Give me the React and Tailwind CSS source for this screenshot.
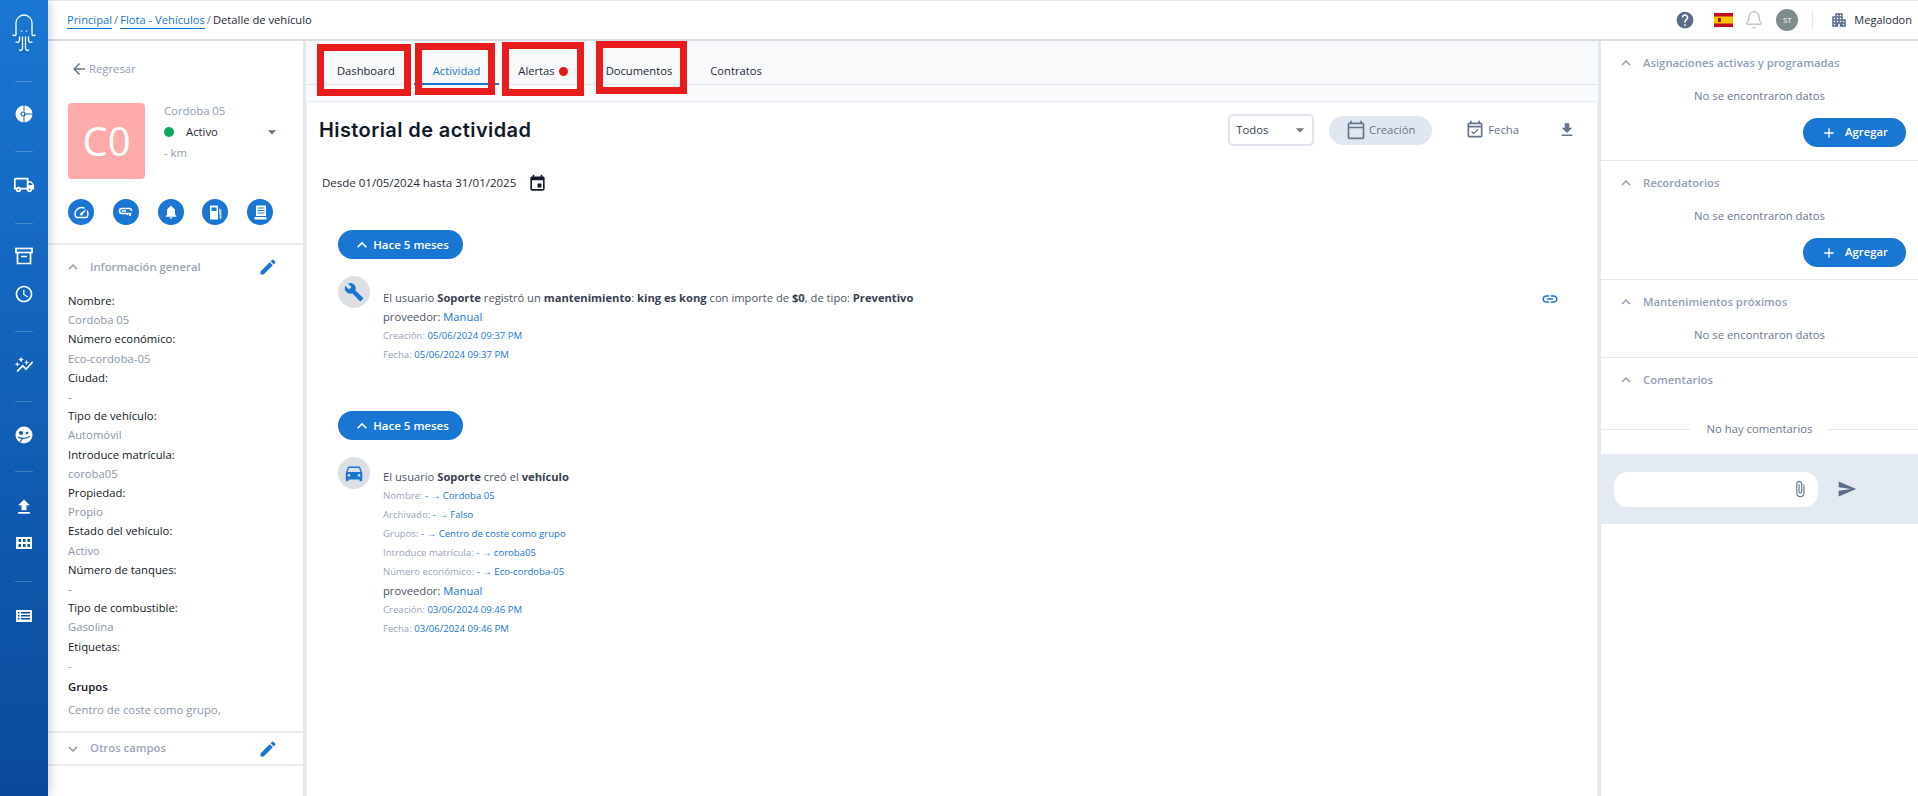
import React from "react";
import {
  MdOutlineLocalShipping, MdOutlineAccessTime, MdAutoGraph, MdFileUpload,
  MdEdit, MdArrowBack, MdKeyboardArrowUp, MdKeyboardArrowDown, MdArrowDropDown, MdEvent, MdOutlineCalendarToday,
  MdOutlineEventAvailable, MdFileDownload, MdHelp, MdApartment, MdBuild, MdDirectionsCar, MdLink, MdAttachFile, MdSend, MdAdd,
  MdOutlineSpeed, MdNotifications, MdExpandLess,
} from "react-icons/md";
import { Bell } from "lucide-react";

function Logo() {
  return (
    <svg width="26" height="42" viewBox="0 0 26 42" fill="none" stroke="white" strokeWidth="1.3" strokeLinecap="round">
      <path d="M5 22V11a8 8 0 0 1 16 0v11c0 2 2 2 3 1" />
      <path d="M5 22c0 2-2 2-3 1" />
      <path d="M8.500 25v3c0 2-2 3-3.500 2" />
      <path d="M11.500 25v11c0 2-2 3-3 2" />
      <path d="M14.500 25v11c0 2 2 3 3 2" />
      <path d="M17.500 25v3c0 2 2 3 3.500 2" />
      <circle cx="10.500" cy="19" r=".8" fill="white" stroke="none" />
      <circle cx="15.500" cy="19" r=".8" fill="white" stroke="none" />
    </svg>
  );
}

function Flag() {
  return (
    <svg width="19" height="14" viewBox="0 0 19 14">
      <rect width="19" height="14" fill="#c60b1e" />
      <rect y="3.500" width="19" height="7" fill="#ffc400" />
      <rect x="4" y="5" width="3" height="4" fill="#ad1519" />
    </svg>
  );
}

function PieIcon() {
  return (
    <svg width="18" height="18" viewBox="0 0 18 18" className="shrink-0 mt-[23px]">
      <circle cx="9" cy="9" r="8.500" fill="white" />
      <path d="M9 0v6.500M9 11.500V18M9 9h9" stroke="#1669bf" strokeWidth="1" />
      <circle cx="8" cy="9" r="2" fill="none" stroke="#1669bf" strokeWidth="1.200" />
    </svg>
  );
}

function ArchiveIcon() {
  return (
    <svg width="18" height="18" viewBox="0 0 18 18" fill="none" stroke="white" strokeWidth="1.700" className="shrink-0 mt-[23px]">
      <rect x="1" y="1.500" width="16" height="4" />
      <path d="M2.500 5.500V16.500H15.500V5.500M6 9.500h6" />
    </svg>
  );
}

function FaceIcon() {
  return (
    <svg width="18" height="18" viewBox="0 0 18 18" className="shrink-0 mt-[24px]">
      <circle cx="9" cy="9" r="8.500" fill="white" />
      <circle cx="6" cy="7" r="2" fill="#0f5cb0" />
      <circle cx="12" cy="7" r="1.300" fill="#0f5cb0" />
      <path d="M3 11c3 2 7 2 12-.5M5 16l3-4" stroke="#0f5cb0" strokeWidth="1.200" fill="none" />
    </svg>
  );
}

function GridIcon() {
  return (
    <svg width="16" height="12" viewBox="0 0 16 12" className="shrink-0 mt-[20px]">
      <rect width="16" height="12" fill="white" />
      {[2.500, 7, 11.500].map((x) => [2, 7].map((y) => <rect key={`${x}-${y}`} x={x} y={y} width="2.500" height="3" fill="#0b57a8" />))}
    </svg>
  );
}

function ListIcon() {
  return (
    <svg width="16" height="12" viewBox="0 0 16 12" className="shrink-0 mt-[28px]">
      <rect width="16" height="12" fill="white" />
      {[2, 5, 8].map((y) => (
        <g key={y} fill="#0b4fa0">
          <rect x="2" y={y} width="1.500" height="1.500" />
          <rect x="5" y={y} width="9" height="1.500" />
        </g>
      ))}
    </svg>
  );
}

function KeyIcon() {
  return (
    <svg width="16" height="12" viewBox="0 0 16 12" fill="none" stroke="white" strokeWidth="1.600">
      <path d="M8 2.500H4a2.500 2.500 0 0 0 0 5h9.500M12 7.500v2.500M9.500 7.500v1.500M8 5H4" />
      <path d="M8 2.500h3.500a2 2 0 0 1 2 2.500" />
    </svg>
  );
}

function FuelIcon() {
  return (
    <svg width="13" height="15" viewBox="0 0 13 15" fill="white">
      <path d="M1 1.500A1 1 0 0 1 2 .5h6a1 1 0 0 1 1 1V14.500H1zM2.500 2.500V6h5V2.500z" fillRule="evenodd" />
      <path d="M10 3l2.500 2V13a1 1 0 0 1-2 0V9H10z" opacity=".7" />
    </svg>
  );
}

function BookIcon() {
  return (
    <svg width="13" height="15" viewBox="0 0 13 15" fill="white">
      <path d="M2 .500H12V11H2zM3.500 2.500V3.500H10.500V2.500zM3.500 5V6H10.500V5zM3.500 7.500V8.500H10.500V7.500z" fillRule="evenodd" />
      <rect x="0.500" y="12" width="12" height="2.500" />
    </svg>
  );
}

function SideDivider() {
  return <div className="w-[18px] h-px bg-white/20 shrink-0" />;
}

function Sidebar() {
  return (
    <aside className="relative z-10 w-12 shrink-0 flex flex-col items-center bg-gradient-to-b from-[#1976d2] to-[#0a4a9c] shadow-[2px_0_10px_rgba(0,0,0,0.18)] text-white">
      <div className="mt-3 h-[42px] shrink-0"><Logo /></div>
      <div className="mt-[27px]"><SideDivider /></div>
      <PieIcon />
      <div className="mt-[28px]"><SideDivider /></div>
      <MdOutlineLocalShipping className="mt-[22px] shrink-0" size={22} />
      <div className="mt-[27px]"><SideDivider /></div>
      <ArchiveIcon />
      <MdOutlineAccessTime className="mt-[19px] shrink-0" size={20} />
      <div className="mt-[27px]"><SideDivider /></div>
      <MdAutoGraph className="mt-[23px] shrink-0" size={20} />
      <div className="mt-[26px]"><SideDivider /></div>
      <FaceIcon />
      <div className="mt-[27px]"><SideDivider /></div>
      <MdFileUpload className="mt-[25px] shrink-0" size={20} />
      <GridIcon />
      <div className="mt-[32px]"><SideDivider /></div>
      <ListIcon />
    </aside>
  );
}

function TopBar() {
  return (
    <header className="h-[41px] shrink-0 border-t border-t-[#e5e7eb] border-b-2 border-b-[#d7dce5] bg-white flex items-center pl-[19px] pr-[6px] text-[11.200px]">
      <a className="text-[#1976d2] border-b border-[#1976d2] leading-[16px]">Principal</a>
      <span className="text-[#6b7a90] mx-[2px]">/</span>
      <a className="text-[#1976d2] border-b border-[#1976d2] leading-[16px]">Flota - Vehículos</a>
      <span className="text-[#6b7a90] mx-[2px]">/</span>
      <span className="text-[#1f2937]">Detalle de vehículo</span>
      <div className="ml-auto flex items-center">
        <MdHelp size={20} className="text-[#5a6c8a]" />
        <div className="ml-[19px]"><Flag /></div>
        <Bell size={20} strokeWidth={1} className="ml-[11px] text-[#8a96a8]" />
        <div className="ml-[12px] w-[22px] h-[22px] rounded-full bg-[#7f8c8d] text-white text-[8px] flex items-center justify-center">ST</div>
        <div className="ml-[14px] w-px h-[20px] bg-[#e2e8f0]" />
        <MdApartment size={18} className="ml-[17px] text-[#5a6c8a]" />
        <span className="ml-[6px] text-[11px] text-[#1f2937]">Megalodon</span>
      </div>
    </header>
  );
}

const INFO = [
  ["Nombre:", "Cordoba 05"],
  ["Número económico:", "Eco-cordoba-05"],
  ["Ciudad:", "-"],
  ["Tipo de vehículo:", "Automóvil"],
  ["Introduce matrícula:", "coroba05"],
  ["Propiedad:", "Propio"],
  ["Estado del vehículo:", "Activo"],
  ["Número de tanques:", "-"],
  ["Tipo de combustible:", "Gasolina"],
  ["Etiquetas:", "-"],
];

function RoundAction({ children }) {
  return <div className="w-[26px] h-[26px] rounded-full bg-[#1976d2] text-white flex items-center justify-center">{children}</div>;
}

function LeftPanel() {
  return (
    <section className="w-[258px] shrink-0 bg-white border-r-[3px] border-r-[#e2e8f0] text-[11.300px] flex flex-col">
      <div className="pl-5 pr-[25px] pt-[19px] pb-[18px] border-b-2 border-b-[#e8ecf3]">
        <div className="flex items-center h-[18px] pl-[2px] text-[#929fb4]">
          <MdArrowBack size={18} className="text-[#67768f] mr-[1px]" />
          <span>Regresar</span>
        </div>
        <div className="mt-[25px] flex">
          <div className="w-[77px] h-[76px] rounded-[4px] bg-[#ffabab] text-white text-[40px] flex items-center justify-center">C0</div>
          <div className="ml-[19px] flex-1 text-[#8e9db5]">
            <div className="mt-[-1px] leading-[18px]">Cordoba 05</div>
            <div className="mt-[3px] flex items-center h-[18px]">
              <span className="w-[10px] h-[10px] rounded-full bg-[#0daa60]" />
              <span className="ml-3 text-[#1f2937]">Activo</span>
              <MdArrowDropDown size={20} className="ml-auto mr-[-4px] text-[#6f7785]" />
            </div>
            <div className="mt-[3px] leading-[18px]">- km</div>
          </div>
        </div>
        <div className="mt-5 flex justify-between w-[205px]">
          <RoundAction><MdOutlineSpeed size={17} /></RoundAction>
          <RoundAction><KeyIcon /></RoundAction>
          <RoundAction><MdNotifications size={16} /></RoundAction>
          <RoundAction><FuelIcon /></RoundAction>
          <RoundAction><BookIcon /></RoundAction>
        </div>
      </div>
      <div className="pl-5 pr-[25px] pt-[13px] border-b-2 border-b-[#e8ecf3] pb-[12px]">
        <div className="relative flex items-center h-[18px] font-semibold text-[#9aa5b8]">
          <MdExpandLess size={18} className="text-[#8e9bb0] w-[22px] -ml-[6px]" />
          <span className="ml-[6px]">Información general</span>
          <MdEdit size={20} className="ml-auto text-[#1976d2]" />
        </div>
        <div className="mt-[15px] leading-[19.200px]">
          {INFO.map(([label, value]) => (
            <React.Fragment key={label}>
              <div className="text-[#111827]">{label}</div>
              <div className="text-[#8a97ab]">{value}</div>
            </React.Fragment>
          ))}
        </div>
        <div className="mt-[3px] leading-[18px] font-semibold text-[#111827]">Grupos</div>
        <div className="mt-[5px] leading-[18px] text-[#8a97ab]">Centro de coste como grupo,</div>
      </div>
      <div className="pl-5 pr-[25px] h-[33px] border-b-2 border-b-[#e8ecf3] flex items-center font-semibold text-[#9aa5b8]">
        <MdKeyboardArrowDown size={18} className="text-[#8e9bb0] w-[22px] -ml-[6px]" />
        <span className="ml-[6px]">Otros campos</span>
        <MdEdit size={20} className="ml-auto text-[#1976d2]" />
      </div>
    </section>
  );
}

function Tab({ children, active }) {
  return (
    <div className={`px-[19px] h-[44px] pt-[18px] leading-[28px] flex items-center border-b-2 ${active ? "border-b-[#1976d2] text-[#1976d2]" : "border-b-transparent text-[#1f2937]"}`}>
      {children}
    </div>
  );
}

function Pill() {
  return (
    <div className="w-[125px] h-[29px] rounded-full bg-[#1976d2] text-white font-semibold text-[11.500px] flex items-center justify-center shrink-0">
      <MdKeyboardArrowUp size={20} className="mr-[1px]" />
      Hace 5 meses
    </div>
  );
}

function Small({ label, children }) {
  return (
    <div className="text-[9.600px] leading-[19px] text-[#9aa5b8]">
      {label}: <span className="text-[#1976d2]">{children}</span>
    </div>
  );
}

function Event({ icon, children, link, top }) {
  return (
    <div className="relative mt-[17px] flex items-start">
      <div className="w-8 h-8 rounded-full bg-[#dcdfe3] text-[#1976d2] flex items-center justify-center shrink-0">{icon}</div>
      <div className={`ml-[13px] ${top} text-[#4b5563] flex-1`}>{children}</div>
      {link && <MdLink size={18} className="absolute right-[17px] top-[14px] text-[#1976d2]" />}
    </div>
  );
}

function Line({ children }) {
  return <div className="leading-[19px] text-[11.200px] text-[#4b5563]">{children}</div>;
}

function Main() {
  const b = "font-bold text-[#374151]";
  const v = "text-[#1976d2]";
  return (
    <main className="flex-1 min-w-0 bg-[#f8f9fb] flex flex-col relative">
      <div className="h-[44px] shrink-0 border-b border-b-[#e2e8f0] flex items-start pl-[12px] text-[11.200px]">
        <Tab>Dashboard</Tab>
        <Tab active>Actividad</Tab>
        <Tab>
          <span>Alertas</span><span className="ml-1 w-[9px] h-[9px] rounded-full bg-[#e01b1b]" />
        </Tab>
        <Tab>Documentos</Tab>
        <Tab>Contratos</Tab>
      </div>
      <div className="mt-4 flex-1 bg-white border-t border-l border-r border-[#e8ecf3] rounded-t-[4px] pl-[12px] pr-[21px] pt-[12px]">
        <div className="flex items-center h-8">
          <h1 className="font-['Inter',sans-serif] text-[20px] font-semibold tracking-[0.4px] text-[#111827]">Historial de actividad</h1>
          <div className="ml-auto w-[86px] h-8 rounded-[5px] border-2 border-[#dfe5ee] flex items-center pl-[6px] pr-[2px] text-[11.300px] text-[#374151]">
            Todos
            <MdArrowDropDown size={20} className="ml-auto text-[#6f7785]" />
          </div>
          <div className="ml-[15px] w-[103px] h-[29px] rounded-full bg-[#e1e7f0] flex items-center justify-center text-[11.300px] text-[#64748b]">
            <MdOutlineCalendarToday size={20} className="mr-[3px] text-[#64748b]" />
            Creación
          </div>
          <div className="ml-[33px] flex items-center text-[11.300px] text-[#64748b]">
            <MdOutlineEventAvailable size={20} className="mr-[3px]" />
            Fecha
          </div>
          <MdFileDownload size={18} className="ml-[39px] text-[#64748b]" />
        </div>
        <div className="mt-[27px] pl-[3px] flex items-center h-[20px] text-[11.500px] text-[#1f2937]">
          Desde 01/05/2024 hasta 31/01/2025
          <MdEvent size={19} className="ml-[12px] text-[#111827]" />
        </div>
        <div className="pl-[19px] mt-[37px]">
          <Pill />
          <Event icon={<MdBuild size={20} />} link top="mt-[12px]">
            <Line>El usuario <span className={b}>Soporte</span> registró un <span className={b}>mantenimiento</span>: <span className={b}>king es kong</span> con importe de <span className={b}>$0</span>, de tipo: <span className={b}>Preventivo</span></Line>
            <Line>proveedor: <span className={v}>Manual</span></Line>
            <Small label="Creación">05/06/2024 09:37 PM</Small>
            <Small label="Fecha">05/06/2024 09:37 PM</Small>
          </Event>
          <div className="mt-[47px]"><Pill /></div>
          <Event icon={<MdDirectionsCar size={22} />} top="mt-[10px]">
            <Line>El usuario <span className={b}>Soporte</span> creó el <span className={b}>vehículo</span></Line>
            <Small label="Nombre">- → Cordoba 05</Small>
            <Small label="Archivado">- → Falso</Small>
            <Small label="Grupos">- → Centro de coste como grupo</Small>
            <Small label="Introduce matrícula">- → coroba05</Small>
            <Small label="Número económico">- → Eco-cordoba-05</Small>
            <Line>proveedor: <span className={v}>Manual</span></Line>
            <Small label="Creación">03/06/2024 09:46 PM</Small>
            <Small label="Fecha">03/06/2024 09:46 PM</Small>
          </Event>
        </div>
      </div>
      <div className="absolute left-[11px] top-[3px] w-[94px] h-[52px] border-[7px] border-[#e81c1c]" />
      <div className="absolute left-[109px] top-[2px] w-[80px] h-[52px] border-[7px] border-[#e81c1c]" />
      <div className="absolute left-[196px] top-[1px] w-[82px] h-[54px] border-[7px] border-[#e81c1c]" />
      <div className="absolute left-[290px] top-0 w-[91px] h-[53px] border-[7px] border-[#e81c1c]" />
    </main>
  );
}

function SectionHead({ children }) {
  return (
    <div className="flex items-center h-[18px] pl-[18px] font-semibold text-[#929fb4]">
      <MdExpandLess size={18} className="text-[#8e9bb0] -ml-[2px]" />
      <span className="ml-[8px]">{children}</span>
    </div>
  );
}

function Empty() {
  return <div className="mt-[15px] h-[18px] leading-[18px] text-center text-[#6b7a90]">No se encontraron datos</div>;
}

function AddBtn() {
  return (
    <div className="mt-[13px] ml-auto mr-3 w-[103px] h-[29px] rounded-full bg-[#1976d2] text-white font-semibold flex items-center justify-center">
      <MdAdd size={16} className="mr-[8px]" />
      Agregar
    </div>
  );
}

function RightPanel() {
  return (
    <section className="w-[320px] shrink-0 bg-white border-l-[3px] border-l-[#e2e8f0] text-[11.300px] flex flex-col">
      <div className="pt-[13px] pb-[13px] border-b border-b-[#e2e8f0] flex flex-col">
        <SectionHead>Asignaciones activas y programadas</SectionHead>
        <Empty />
        <AddBtn />
      </div>
      <div className="pt-[13px] pb-[12px] border-b border-b-[#e2e8f0] flex flex-col">
        <SectionHead>Recordatorios</SectionHead>
        <Empty />
        <AddBtn />
      </div>
      <div className="pt-[13px] pb-[13px] border-b border-b-[#e2e8f0] flex flex-col">
        <SectionHead>Mantenimientos próximos</SectionHead>
        <Empty />
      </div>
      <div className="pt-[13px] flex flex-col">
        <SectionHead>Comentarios</SectionHead>
        <div className="mt-[31px] flex items-center h-[18px] text-[#6b7a90]">
          <div className="flex-1 h-px bg-[#e2e8f0]" />
          <span className="px-4">No hay comentarios</span>
          <div className="flex-1 h-px bg-[#e2e8f0]" />
        </div>
      </div>
      <div className="mt-[16px] h-[70px] bg-[#e3eaf2] flex items-center pl-[13px]">
        <div className="w-[204px] h-[35px] rounded-[14px] bg-white flex items-center justify-end pr-[9px]">
          <MdAttachFile size={18} className="text-[#64748b]" />
        </div>
        <MdSend size={20} className="ml-[19px] text-[#5a6c8a]" />
      </div>
    </section>
  );
}

export default function App() {
  return (
    <div className="w-[1918px] h-[796px] flex overflow-hidden bg-white font-['Open_Sans',sans-serif]">
      <Sidebar />
      <div className="flex-1 min-w-0 flex flex-col">
        <TopBar />
        <div className="flex-1 min-h-0 flex">
          <LeftPanel />
          <Main />
          <RightPanel />
        </div>
      </div>
    </div>
  );
}
